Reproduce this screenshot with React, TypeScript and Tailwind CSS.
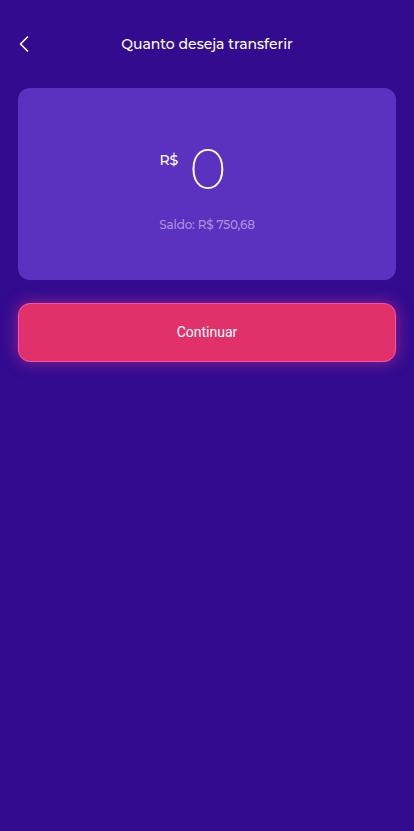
import { ChevronLeft } from 'lucide-react';

export default function App() {
    return (
        <div className="min-h-[831px] w-full bg-[#330b8f] pt-[22px] font-['Montserrat','Inter','Noto_Sans',sans-serif]">
            {/* Header */}
            <div className="relative flex items-center justify-center h-[44px]">
                <button className="absolute left-[10px] top-[8px] text-white">
                    <ChevronLeft size={28} strokeWidth={1.4} />
                </button>
                <h1 className="text-[14px] text-white font-medium">Quanto deseja transferir</h1>
            </div>

            <div className="px-[18px] pt-[22px]">
                {/* Amount card */}
                <div className="h-[192px] rounded-[12px] bg-[#5b32c0] flex flex-col items-center pt-[56px]">
                    <div className="flex items-start gap-[11px] pr-[28px]">
                        <span className="text-[14px] text-white mt-[6px] font-medium">R$</span>
                        <span className="text-[57px] leading-[50px] text-white font-extralight">0</span>
                    </div>
                    <p className="mt-[22px] text-[12px] text-[#a890dc] font-medium tracking-[-0.2px]">Saldo: R$ 750,68</p>
                </div>

                {/* Continue button */}
                <button className="mt-[23px] w-full h-[59px] rounded-[12px] bg-[#e0316b] border border-[#ff4fa8] text-white text-[14px] font-['Roboto',sans-serif] shadow-[0_0_16px_rgba(230,60,150,0.55)]">
                    Continuar
                </button>
            </div>
        </div>
    );
}
